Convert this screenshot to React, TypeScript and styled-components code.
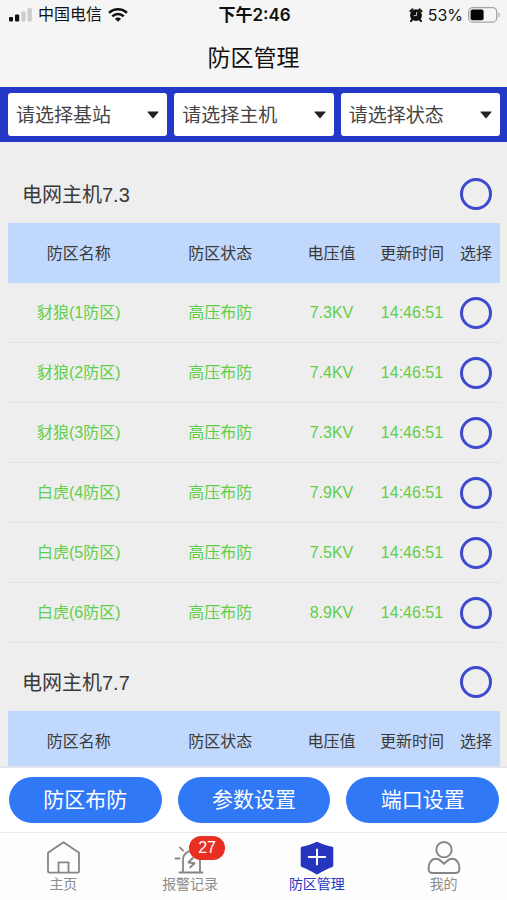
import React from 'react';
import styled, { createGlobalStyle } from 'styled-components';

const GlobalStyle = createGlobalStyle`
  *, *::before, *::after { box-sizing: border-box; }
  body {
    margin: 0;
    background: #eeeeee;
    color: #3a3a3a;
    font-family: "Liberation Sans", "Noto Sans CJK SC", sans-serif;
  }
  button, select, input { font: inherit; margin: 0; }
`;

const Screen = styled.div`
  display: flex;
  flex-direction: column;
  height: 100vh;
  overflow: hidden;
`;

const TopArea = styled.header`
  background: #f5f5f5;
  color: #111111;
`;

const StatusBar = styled.div`
  display: grid;
  grid-template-columns: 1fr auto 1fr;
  align-items: center;
  height: 30px;
  padding: 0 7px 0 9px;
  font-size: 16px;
  line-height: 24px;
`;

const StatusGroup = styled.div<{ $end?: boolean }>`
  display: flex;
  align-items: center;
  gap: ${(p) => (p.$end ? '5px' : '6px')};
  justify-content: ${(p) => (p.$end ? 'flex-end' : 'flex-start')};
  svg { display: block; }
`;

const Clock = styled.time`
  font-family: Inter, "Noto Sans CJK SC", sans-serif;
  font-size: 17px;
  font-weight: 600;
`;

const Percent = styled.span`
  font-family: Inter, sans-serif;
`;

const PageTitle = styled.h1`
  margin: 0;
  height: 57px;
  font-size: 23px;
  font-weight: 400;
  line-height: 56px;
  text-align: center;
`;

const FilterBar = styled.form`
  display: grid;
  grid-template-columns: repeat(3, 1fr);
  gap: 7px;
  padding: 6px 7px 6px 8px;
  background: #2338c6;
`;

const FilterField = styled.label`
  position: relative;
  display: block;
  svg {
    position: absolute;
    right: 8px;
    top: 18px;
    pointer-events: none;
  }
`;

const FilterSelect = styled.select`
  display: block;
  width: 100%;
  height: 43px;
  padding: 2px 24px 0 8px;
  border: 0;
  border-radius: 3px;
  background: #ffffff;
  color: #444444;
  font-size: 19px;
  appearance: none;
`;

const List = styled.main`
  flex: 1;
  min-height: 0;
  overflow-y: auto;
  scrollbar-width: none;
  padding: 13px 7px 0 8px;
`;

const HostHeader = styled.div`
  display: flex;
  align-items: center;
  justify-content: space-between;
  height: 68px;
  padding: 9px 8px 0 14px;
`;

const HostName = styled.h2`
  margin: 0;
  padding-top: 2px;
  font-size: 20px;
  font-weight: 400;
  line-height: 30px;
`;

const Tick = styled.input`
  display: block;
  width: 32px;
  height: 32px;
  margin: 0 auto;
  border: 3px solid #3d4acf;
  border-radius: 50%;
  background: transparent;
  appearance: none;
  &:checked { background: #3d4acf; box-shadow: inset 0 0 0 4px #eeeeee; }
  ${HostHeader} & { margin: 0; }
`;

const ZoneTable = styled.table`
  width: 100%;
  table-layout: fixed;
  border-collapse: separate;
  border-spacing: 0;
  font-size: 16px;
  line-height: 24px;
`;

const HeadCell = styled.th<{ $width?: number }>`
  width: ${(p) => (p.$width ? `${p.$width}px` : 'auto')};
  height: 60px;
  padding: 1px 0 0;
  background: #c0d8fc;
  font-weight: 400;
  text-align: center;
  white-space: nowrap;
`;

const Cell = styled.td`
  height: 60px;
  padding: 1px 0 0;
  border-bottom: 1px solid #dfe1e2;
  color: #5fce4b;
  text-align: center;
  white-space: nowrap;
`;

const ActionBar = styled.div`
  display: grid;
  grid-template-columns: repeat(3, 1fr);
  gap: 16px;
  padding: 9px 8px 9px 9px;
  border-top: 2px solid #e2e6ec;
  background: #ffffff;
`;

const ActionButton = styled.button`
  height: 46px;
  padding: 0;
  border: 0;
  border-radius: 23px;
  background: #3078f6;
  color: #ffffff;
  font-size: 21px;
  font-weight: 400;
  line-height: 32px;
`;

const TabBar = styled.nav`
  display: grid;
  grid-template-columns: repeat(4, 1fr);
  height: 68px;
  border-top: 1px solid #e8eaec;
  background: #fdfdfd;
`;

const Tab = styled.a<{ $active?: boolean }>`
  display: flex;
  flex-direction: column;
  align-items: center;
  padding-top: 8px;
  color: ${(p) => (p.$active ? '#2a36bd' : '#8c8c8c')};
  font-size: 14px;
  line-height: 18px;
  text-decoration: none;
`;

const TabIcon = styled.span`
  position: relative;
  height: 34px;
  svg { display: block; }
`;

const Badge = styled.span`
  position: absolute;
  left: 16px;
  top: -5px;
  width: 36px;
  border-radius: 12px;
  background: #e92f22;
  color: #ffffff;
  font-size: 16px;
  line-height: 24px;
  text-align: center;
`;

const SignalIcon = () => (
  <svg width="23" height="16" viewBox="0 0 23 16" aria-hidden="true">
    <rect x="0" y="10" width="4" height="4.5" rx="1" fill="#111" />
    <rect x="6" y="7.5" width="4.2" height="7" rx="1" fill="#111" />
    <rect x="12.4" y="4.5" width="4.2" height="10" rx="1" fill="#ccc" />
    <rect x="18.6" y="1" width="4.2" height="13.5" rx="1" fill="#ccc" />
  </svg>
);

const WifiIcon = () => (
  <svg width="20" height="16" viewBox="0 0 20 16" fill="none" stroke="#111" strokeWidth="2.5" aria-hidden="true">
    <path d="M1 5.9C6 .9 14 .9 19 5.9" />
    <path d="M4.3 9.4c3.3-3.2 8.1-3.2 11.4 0" />
    <path d="M10 14.8 6.9 11.7c1.8-1.6 4.4-1.6 6.2 0Z" fill="#111" stroke="none" />
  </svg>
);

const AlarmClockIcon = () => (
  <svg width="14" height="14" viewBox="0 0 14 14" aria-hidden="true">
    <circle cx="7" cy="7.2" r="5.9" fill="#111" />
    <path d="M1.4 3.2 3.6 1.3M12.600 3.200 10.400 1.300M3.2 11.6 2 13M10.8 11.6 12 13" stroke="#111" strokeWidth="2" strokeLinecap="round" />
    <path d="M7.600 4v3.600H4.800" fill="none" stroke="#ccc" strokeWidth="1" />
  </svg>
);

const BatteryIcon = () => (
  <svg width="32" height="16" viewBox="0 0 32 16" aria-hidden="true">
    <rect x=".7" y=".7" width="28" height="14.4" rx="4.2" fill="none" stroke="#a5a5a5" strokeWidth="1.3" />
    <rect x="2.6" y="2.6" width="13" height="10.6" rx="2" fill="#050505" />
    <path d="M30.4 5.3c1.7.7 1.7 4.5 0 5.2Z" fill="#a5a5a5" />
  </svg>
);

const CaretIcon = () => (
  <svg width="12" height="8" viewBox="0 0 12 8" aria-hidden="true">
    <path d="M.8.5h10.4c.4 0 .5.4.2.7L6.5 7c-.3.3-.7.3-1 0L.6 1.2C.3.9.4.5.8.5Z" fill="#222" />
  </svg>
);

const HomeIcon = () => (
  <svg width="34" height="34" viewBox="0 0 34 34" fill="none" stroke="#858585" strokeWidth="1.8" strokeLinejoin="round" aria-hidden="true">
    <path d="M17.500 1.200 2 11.800v18.300c0 1.100.5 1.600 1.600 1.600h27.800c1.100 0 1.600-.5 1.600-1.600V11.800Z" />
    <path d="M12.500 31.700V21.300h10v10.400" />
  </svg>
);

const SirenIcon = () => (
  <svg width="34" height="34" viewBox="0 0 34 34" fill="none" stroke="#858585" strokeWidth="1.8" strokeLinecap="round" strokeLinejoin="round" aria-hidden="true">
    <path d="M6.500 31.500h23M10 31V18.500a8.500 8.500 0 0 1 17 0V31" />
    <path d="M7 6.500l3 3.200M2.500 17.500h4" />
    <path d="m19.800 17-4.300 4.400 6 .8-4.300 4.200" strokeWidth="2" />
  </svg>
);

const ShieldIcon = () => (
  <svg width="34" height="34" viewBox="0 0 34 34" aria-hidden="true">
    <path d="M17 .8c.4 0 .8.2 1.3.4 4.7 2.2 9.3 3.7 14 4.6.7.1 1 .5 1 1.200v17c0 1-.3 1.600-1.100 2-5 2-9.600 4.300-14 7-.8.5-1.600.5-2.400 0-4.400-2.700-9-5-14-7-.8-.4-1.100-1-1.100-2V7c0-.7.3-1.100 1-1.200 4.700-.9 9.300-2.400 14-4.600.5-.2.900-.4 1.300-.4Z" fill="#2635c0" />
    <path d="M17 8.500v15M8.800 16h16.400" stroke="#fff" strokeWidth="2" strokeLinecap="round" />
  </svg>
);

const PersonIcon = () => (
  <svg width="34" height="34" viewBox="0 0 34 34" fill="none" stroke="#858585" strokeWidth="1.900" strokeLinejoin="round" aria-hidden="true">
    <circle cx="17" cy="8.700" r="7.700" />
    <path d="M1.500 27.500c0-5.500 3-9.700 7.500-9.700 3 0 4.500 1.300 8 5 3.500-3.700 5-5 8-5 4.500 0 7.500 4.200 7.500 9.700 0 3-1 4.500-3.800 4.500H5.300c-2.800 0-3.800-1.500-3.800-4.500Z" />
  </svg>
);

type Zone = { name: string; status: string; voltage: string; time: string };

const hosts: { name: string; zones: Zone[] }[] = [
  {
    name: '电网主机7.3',
    zones: [
      { name: '豺狼(1防区)', status: '高压布防', voltage: '7.3KV', time: '14:46:51' },
      { name: '豺狼(2防区)', status: '高压布防', voltage: '7.4KV', time: '14:46:51' },
      { name: '豺狼(3防区)', status: '高压布防', voltage: '7.3KV', time: '14:46:51' },
      { name: '白虎(4防区)', status: '高压布防', voltage: '7.9KV', time: '14:46:51' },
      { name: '白虎(5防区)', status: '高压布防', voltage: '7.5KV', time: '14:46:51' },
      { name: '白虎(6防区)', status: '高压布防', voltage: '8.9KV', time: '14:46:51' },
    ],
  },
  { name: '电网主机7.7', zones: [] },
];

const filters = ['请选择基站', '请选择主机', '请选择状态'];
const actions = ['防区布防', '参数设置', '端口设置'];

const tabs = [
  { label: '主页', Icon: HomeIcon },
  { label: '报警记录', Icon: SirenIcon, badge: 27 },
  { label: '防区管理', Icon: ShieldIcon, active: true },
  { label: '我的', Icon: PersonIcon },
];

export default function App() {
  return (
    <Screen>
      <GlobalStyle />
      <TopArea>
        <StatusBar>
          <StatusGroup>
            <SignalIcon />
            <span>中国电信</span>
            <WifiIcon />
          </StatusGroup>
          <Clock>下午2:46</Clock>
          <StatusGroup $end>
            <AlarmClockIcon />
            <Percent>53%</Percent>
            <BatteryIcon />
          </StatusGroup>
        </StatusBar>
        <PageTitle>防区管理</PageTitle>
      </TopArea>
      <FilterBar>
        {filters.map((label) => (
          <FilterField key={label}>
            <FilterSelect aria-label={label}>
              <option>{label}</option>
            </FilterSelect>
            <CaretIcon />
          </FilterField>
        ))}
      </FilterBar>
      <List>
        {hosts.map((host) => (
          <section key={host.name}>
            <HostHeader>
              <HostName>{host.name}</HostName>
              <Tick type="checkbox" aria-label={host.name} />
            </HostHeader>
            <ZoneTable>
              <thead>
                <tr>
                  <HeadCell>防区名称</HeadCell>
                  <HeadCell>防区状态</HeadCell>
                  <HeadCell $width={81}>电压值</HeadCell>
                  <HeadCell $width={80}>更新时间</HeadCell>
                  <HeadCell $width={48}>选择</HeadCell>
                </tr>
              </thead>
              <tbody>
                {host.zones.map((zone) => (
                  <tr key={zone.name}>
                    <Cell>{zone.name}</Cell>
                    <Cell>{zone.status}</Cell>
                    <Cell>{zone.voltage}</Cell>
                    <Cell>{zone.time}</Cell>
                    <Cell>
                      <Tick type="checkbox" aria-label={zone.name} />
                    </Cell>
                  </tr>
                ))}
              </tbody>
            </ZoneTable>
          </section>
        ))}
      </List>
      <ActionBar>
        {actions.map((label) => (
          <ActionButton key={label} type="button">{label}</ActionButton>
        ))}
      </ActionBar>
      <TabBar>
        {tabs.map(({ label, Icon, badge, active }) => (
          <Tab key={label} href="#" $active={active} aria-current={active ? 'page' : undefined}>
            <TabIcon>
              <Icon />
              {badge && <Badge>{badge}</Badge>}
            </TabIcon>
            {label}
          </Tab>
        ))}
      </TabBar>
    </Screen>
  );
}
